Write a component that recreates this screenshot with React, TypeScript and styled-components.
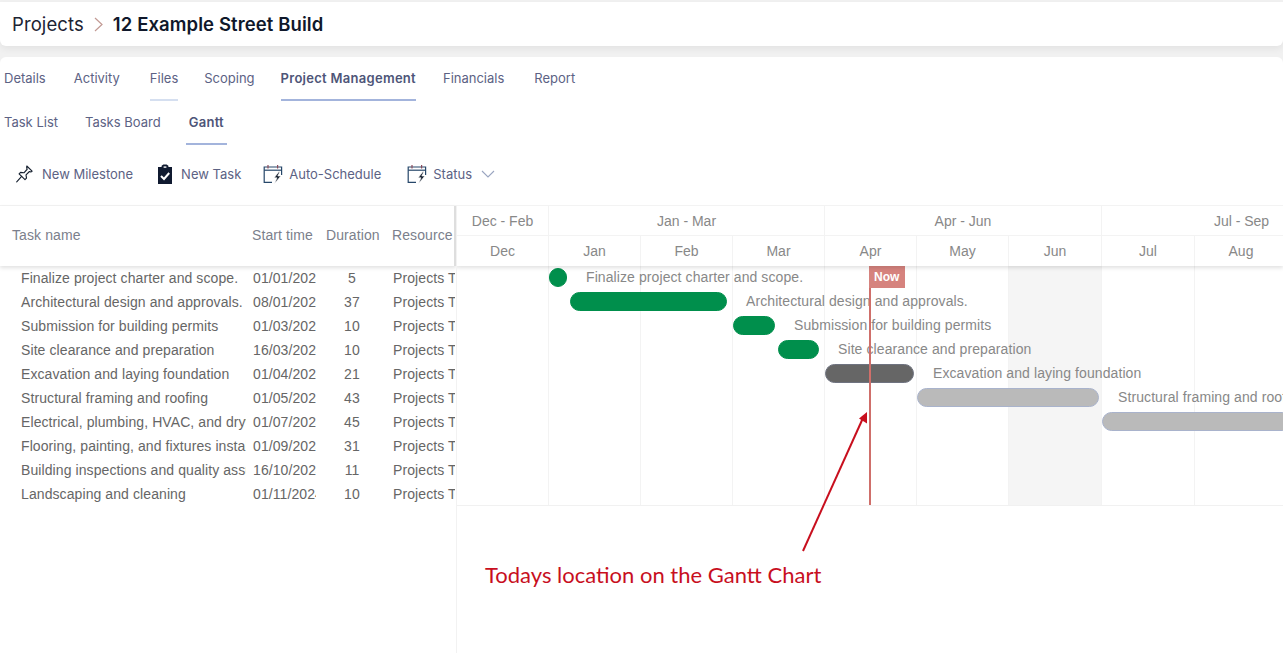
import React from "react";
import { createGlobalStyle, styled } from "styled-components";

const GlobalStyle = createGlobalStyle`
  html, body {
    margin: 0;
    height: 100%;
    background: #ffffff;
    overflow: hidden;
  }
  #root {
    height: 100%;
  }
`;

const uiFont = `Inter, "Open Sans", "Liberation Sans", sans-serif`;
const tableFont = `"Liberation Sans", Arial, sans-serif`;

const Page = styled.div`
  position: relative;
  width: 1283px;
  height: 653px;
  overflow: hidden;
  display: flex;
  flex-direction: column;
  padding-top: 2px;
  box-sizing: border-box;
  background: #f1f1f1;
  font-family: ${uiFont};
`;

const TopBar = styled.header`
  height: 44px;
  flex: none;
  background: #fff;
  border-radius: 0 0 6px 6px;
  box-shadow: 0 3px 7px rgba(0, 0, 0, 0.06);
  display: flex;
  align-items: center;
  padding: 0 12px;
  box-sizing: border-box;
`;

const Crumb = styled.span`
  font-size: 18.5px;
  color: #1c2333;
  letter-spacing: 0.1px;
`;

const CrumbCurrent = styled.span`
  font-size: 18.5px;
  font-weight: 600;
  color: #10182b;
  letter-spacing: 0.1px;
`;

const Panel = styled.main`
  flex: 1;
  margin-top: 11px;
  background: #fff;
  border-radius: 6px 6px 0 0;
  display: flex;
  flex-direction: column;
  min-height: 0;
`;

const TabRow = styled.nav`
  display: flex;
  height: 44px;
  flex: none;
  padding-left: 4px;
`;

const Tab = styled.div<{ $active?: boolean; $hover?: boolean; $gap: number; $pad?: number }>`
  height: 44px;
  box-sizing: border-box;
  margin-right: ${(p) => p.$gap}px;
  margin-left: ${(p) => -(p.$pad ?? 0)}px;
  padding: 0 ${(p) => p.$pad ?? 0}px;
  display: flex;
  align-items: center;
  font-size: 13px;
  font-weight: ${(p) => (p.$active ? 600 : 400)};
  letter-spacing: ${(p) => (p.$active ? 0.28 : 0)}px;
  color: ${(p) => (p.$active ? "#4e5578" : "#5c6284")};
  border-bottom: 2px solid
    ${(p) => (p.$active ? "#a3b4dc" : p.$hover ? "#d5dff0" : "transparent")};
`;

const Toolbar = styled.div`
  height: 60px;
  flex: none;
  box-sizing: border-box;
  padding: 0 0 2px 15px;
  display: flex;
  align-items: center;
`;

const ToolButton = styled.div<{ $gap: number; $iconGap: number }>`
  display: flex;
  align-items: center;
  gap: ${(p) => p.$iconGap}px;
  margin-right: ${(p) => p.$gap}px;
  font-size: 13px;
  color: #5c6284;
`;

const Gantt = styled.section`
  flex: 1;
  min-height: 0;
  display: flex;
  border-top: 1px solid #f3f3f3;
`;

const TaskTable = styled.div`
  width: 456px;
  flex: none;
  font-family: ${tableFont};
  font-size: 14px;
  letter-spacing: 0.09px;
  box-sizing: border-box;
`;

const TableHead = styled.div`
  height: 60px;
  padding-bottom: 2px;
  box-sizing: border-box;
  display: flex;
  align-items: center;
  color: #7b7f8c;
  border-right: 2px solid #dedede;
  box-shadow: 0 2px 4px rgba(0, 0, 0, 0.12);
  position: relative;
`;

const TableRow = styled.div`
  height: 24px;
  display: flex;
  align-items: center;
  color: #666666;
`;

const Cell = styled.div<{ $w: number; $pad?: number; $center?: boolean }>`
  width: ${(p) => p.$w}px;
  flex: none;
  box-sizing: border-box;
  padding-left: ${(p) => p.$pad ?? 0}px;
  text-align: ${(p) => (p.$center ? "center" : "left")};
  white-space: nowrap;
  overflow: hidden;
`;

const Chart = styled.div`
  flex: 1;
  min-width: 0;
  position: relative;
  overflow: hidden;
  border-left: 1px solid #f2f2f2;
  font-family: ${tableFont};
  font-size: 14px;
`;

const ChartHead = styled.div`
  height: 60px;
  position: relative;
  z-index: 3;
  background: #fff;
  box-shadow: 0 2px 4px rgba(0, 0, 0, 0.12);
`;

const HeadRow = styled.div<{ $h: number; $line?: boolean }>`
  height: ${(p) => p.$h}px;
  display: flex;
  box-sizing: border-box;
  border-bottom: ${(p) => (p.$line ? "1px solid #f3f3f3" : "0")};
`;

const HeadCell = styled.div<{ $w: number }>`
  width: ${(p) => p.$w}px;
  flex: none;
  box-sizing: border-box;
  border-right: 1px solid #f3f3f3;
  display: flex;
  align-items: center;
  justify-content: center;
  color: #888888;
`;

const ChartBody = styled.div`
  height: 239px;
  position: relative;
  border-bottom: 1px solid #f1f1f1;
`;

const Columns = styled.div`
  position: absolute;
  inset: 0;
  display: flex;
`;

const Column = styled.div<{ $w: number; $shade?: boolean }>`
  width: ${(p) => p.$w}px;
  flex: none;
  box-sizing: border-box;
  border-right: 1px solid #f3f3f3;
  background: ${(p) => (p.$shade ? "#f5f5f5" : "transparent")};
`;

const BarRow = styled.div<{ $left: number }>`
  height: 24px;
  position: relative;
  display: flex;
  align-items: flex-start;
  padding-left: ${(p) => p.$left}px;
  white-space: nowrap;
`;

const barColors = {
  done: { fill: "#008f4c", line: "#008f4c" },
  active: { fill: "#666666", line: "#6f7380" },
  todo: { fill: "#bababa", line: "#a9b3cc" },
};

const Bar = styled.div<{ $w: number; $state: keyof typeof barColors }>`
  width: ${(p) => p.$w}px;
  height: 19px;
  margin-top: 2px;
  flex: none;
  box-sizing: border-box;
  border-radius: 9.5px;
  background: ${(p) => barColors[p.$state].fill};
  border: 1px solid ${(p) => barColors[p.$state].line};
`;

const BarLabel = styled.span<{ $gap: number }>`
  margin-left: ${(p) => p.$gap}px;
  margin-top: 3px;
  color: #888888;
  letter-spacing: 0.09px;
`;

const NowLine = styled.div`
  position: absolute;
  left: 412px;
  top: 0;
  bottom: 0;
  width: 2px;
  background: #cf6f6a;
`;

const NowFlag = styled.div`
  position: absolute;
  left: 412px;
  top: 0;
  width: 36px;
  height: 22px;
  box-sizing: border-box;
  padding-left: 5px;
  background: #d6837e;
  color: #fff;
  font-size: 12px;
  font-weight: 700;
  line-height: 22px;
`;

const Callout = styled.svg`
  position: absolute;
  left: 780px;
  top: 400px;
`;

const CalloutText = styled.div`
  position: absolute;
  left: 485px;
  top: 560px;
  font-family: Lato, "Open Sans", sans-serif;
  font-size: 22px;
  line-height: 30px;
  color: #c80f1e;
  white-space: nowrap;
`;

const Chevron = () => (
  <svg width="9" height="15" viewBox="0 0 9 15" style={{ margin: "0 10px" }}>
    <path d="M1 1l7 6.5L1 14" fill="none" stroke="#c29a94" strokeWidth="1.2" />
  </svg>
);

const PinIcon = () => (
  <svg width="19" height="20" viewBox="0 0 20 20" fill="none" stroke="#16202f" strokeWidth="1.2" strokeLinejoin="round" strokeLinecap="round">
    <path d="M12.4 1.6l5.6 5.4-1.4 .9-1.4-.5-3.6 3.5.5 3.4-1.6 1.6-6.2-6 1.6-1.6 3.5 .4 3.4-3.7-.5-1.4z" />
    <path d="M7 12.6l-5.2 5.6" />
  </svg>
);

const ClipboardIcon = () => (
  <svg width="16" height="20" viewBox="0 0 16 20">
    <path d="M1 3h3.6V1.8L6.4 .6h3.2l1.8 1.2V3H15v17H1z" fill="#101a30" />
    <path d="M6.6 2.4h2.8v1.4H6.6z" fill="#fff" />
    <path d="M4 12l3 3 5.2-6" fill="none" stroke="#fff" strokeWidth="2" />
  </svg>
);

const ScheduleIcon = () => (
  <svg width="20" height="20" viewBox="0 0 20 20" fill="none" strokeWidth="1.2">
    <path d="M9 18.4H1.2V3h17.4v8" stroke="#26476a" />
    <path d="M1.2 6.2h17.4" stroke="#26476a" />
    <path d="M5 1v3.4M14.6 1v3.4" stroke="#8a4a5a" />
    <path d="M15.8 7.8l-4.6 6h2.8l-2.4 5.8 6.2-7.6h-3l2-4.2z" fill="#16202f" stroke="#fff" strokeWidth="0.6" />
  </svg>
);

const CaretDown = () => (
  <svg width="14" height="8" viewBox="0 0 14 8" style={{ marginLeft: 3 }}>
    <path d="M1 1l6 6 6-6" fill="none" stroke="#9aa5c0" strokeWidth="1.1" />
  </svg>
);

const quarters = [
  { label: "Dec - Feb", w: 92 },
  { label: "Jan - Mar", w: 276 },
  { label: "Apr - Jun", w: 277 },
  { label: "Jul - Sep", w: 280 },
];

const months = [
  { label: "Dec", w: 92 },
  { label: "Jan", w: 92 },
  { label: "Feb", w: 92 },
  { label: "Mar", w: 92 },
  { label: "Apr", w: 92 },
  { label: "May", w: 92 },
  { label: "Jun", w: 93 },
  { label: "Jul", w: 93 },
  { label: "Aug", w: 93 },
];

type BarState = keyof typeof barColors;

const tasks: {
  name: string;
  start: string;
  days: number;
  left: number;
  width: number;
  gap: number;
  state: BarState;
}[] = [
  { name: "Finalize project charter and scope.", start: "01/01/2024", days: 5, left: 92, width: 18, gap: 19, state: "done" },
  { name: "Architectural design and approvals.", start: "08/01/2024", days: 37, left: 113, width: 157, gap: 19, state: "done" },
  { name: "Submission for building permits", start: "01/03/2024", days: 10, left: 276, width: 42, gap: 19, state: "done" },
  { name: "Site clearance and preparation", start: "16/03/2024", days: 10, left: 321, width: 41, gap: 19, state: "done" },
  { name: "Excavation and laying foundation", start: "01/04/2024", days: 21, left: 368, width: 89, gap: 19, state: "active" },
  { name: "Structural framing and roofing", start: "01/05/2024", days: 43, left: 460, width: 182, gap: 19, state: "todo" },
  { name: "Electrical, plumbing, HVAC, and drywall", start: "01/07/2024", days: 45, left: 645, width: 190, gap: 19, state: "todo" },
  { name: "Flooring, painting, and fixtures installation", start: "01/09/2024", days: 31, left: 0, width: 0, gap: 0, state: "todo" },
  { name: "Building inspections and quality assurance", start: "16/10/2024", days: 11, left: 0, width: 0, gap: 0, state: "todo" },
  { name: "Landscaping and cleaning", start: "01/11/2024", days: 10, left: 0, width: 0, gap: 0, state: "todo" },
];

function App() {
  return (
    <Page>
      <GlobalStyle />
      <TopBar>
        <Crumb>Projects</Crumb>
        <Chevron />
        <CrumbCurrent>12 Example Street Build</CrumbCurrent>
      </TopBar>
      <Panel>
        <TabRow>
          <Tab $gap={28}>Details</Tab>
          <Tab $gap={30}>Activity</Tab>
          <Tab $gap={26} $hover>Files</Tab>
          <Tab $gap={26}>Scoping</Tab>
          <Tab $gap={27} $active>Project Management</Tab>
          <Tab $gap={30}>Financials</Tab>
          <Tab $gap={0}>Report</Tab>
        </TabRow>
        <TabRow>
          <Tab $gap={27}>Task List</Tab>
          <Tab $gap={28}>Tasks Board</Tab>
          <Tab $gap={0} $active $pad={3}>Gantt</Tab>
        </TabRow>
        <Toolbar>
          <ToolButton $gap={24} $iconGap={8}><PinIcon />New Milestone</ToolButton>
          <ToolButton $gap={22} $iconGap={8}><ClipboardIcon />New Task</ToolButton>
          <ToolButton $gap={26} $iconGap={6}><ScheduleIcon />Auto-Schedule</ToolButton>
          <ToolButton $gap={0} $iconGap={6}><ScheduleIcon />Status<CaretDown /></ToolButton>
        </Toolbar>
        <Gantt>
          <TaskTable>
            <TableHead>
              <Cell $w={252} $pad={12}>Task name</Cell>
              <Cell $w={74}>Start time</Cell>
              <Cell $w={66}>Duration</Cell>
              <Cell $w={62}>Resource</Cell>
            </TableHead>
            {tasks.map((t) => (
              <TableRow key={t.name}>
                <Cell $w={246} $pad={21}>{t.name}</Cell>
                <Cell $w={70} $pad={7}>{t.start}</Cell>
                <Cell $w={72} $center>{t.days}</Cell>
                <Cell $w={67} $pad={5}>Projects Team</Cell>
              </TableRow>
            ))}
          </TaskTable>
          <Chart>
            <ChartHead>
              <HeadRow $h={30} $line>
                {quarters.map((q) => (
                  <HeadCell key={q.label} $w={q.w}>{q.label}</HeadCell>
                ))}
              </HeadRow>
              <HeadRow $h={30}>
                {months.map((m) => (
                  <HeadCell key={m.label} $w={m.w}>{m.label}</HeadCell>
                ))}
              </HeadRow>
            </ChartHead>
            <ChartBody>
              <Columns>
                {months.map((m) => (
                  <Column key={m.label} $w={m.w} $shade={m.label === "Jun"} />
                ))}
              </Columns>
              {tasks.map((t) => (
                <BarRow key={t.name} $left={t.left}>
                  {t.width > 0 && <Bar $w={t.width} $state={t.state} />}
                  {t.width > 0 && <BarLabel $gap={t.gap}>{t.name}</BarLabel>}
                </BarRow>
              ))}
              <NowLine />
              <NowFlag>Now</NowFlag>
            </ChartBody>
          </Chart>
        </Gantt>
      </Panel>
      <Callout width="110" height="160" viewBox="0 0 110 160">
        <path d="M23 151L83 18" stroke="#c80f1e" strokeWidth="2" fill="none" />
        <path d="M87 12L79 18.5L87 23.5z" fill="#c80f1e" />
      </Callout>
      <CalloutText>Todays location on the Gantt Chart</CalloutText>
    </Page>
  );
}

export default App;
